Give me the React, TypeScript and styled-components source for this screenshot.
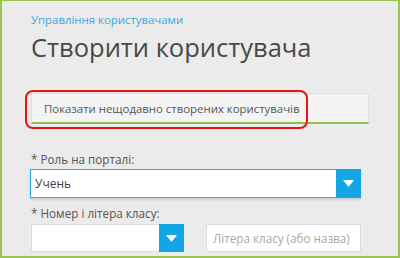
import React from 'react';
import styled, { createGlobalStyle } from 'styled-components';

const GlobalStyle = createGlobalStyle`
  html, body {
    margin: 0;
    padding: 0;
    background: #ebebeb;
  }
  body {
    font-family: "Open Sans", "Noto Sans", "DejaVu Sans", sans-serif;
  }
  * {
    box-sizing: border-box;
  }
`;

const Frame = styled.div`
  width: 400px;
  height: 258px;
  overflow: hidden;
  background: #ebebeb;
  border-style: solid;
  border-color: #9dc34f;
  border-width: 1px 2px 2px 2px;
  padding: 11px 0 0 29px;
  display: flex;
  flex-direction: column;
`;

const Breadcrumb = styled.a`
  font-size: 11.4px;
  line-height: 16px;
  color: #3aa7df;
  text-decoration: none;
`;

const Title = styled.h1`
  margin: 0;
  font-size: 25.5px;
  line-height: 38px;
  font-weight: 400;
  color: #4a4845;
`;

const Annotated = styled.div`
  position: relative;
  margin-top: 27px;
  width: 338px;
`;

const RecentToggle = styled.div`
  height: 31px;
  display: flex;
  align-items: center;
  padding-left: 12px;
  background: #f4f4f4;
  border: 1px solid #dedede;
  border-bottom: 2px solid #8cbf4c;
  font-size: 11.4px;
  color: #555;
`;

const Highlight = styled.div`
  position: absolute;
  left: -6px;
  top: -3px;
  width: 283px;
  height: 39px;
  border: 2px solid #e8141b;
  border-radius: 8px;
  pointer-events: none;
`;

const Label = styled.div<{ $gap: number }>`
  margin-top: ${(p) => p.$gap}px;
  font-size: 11.7px;
  line-height: 16px;
  color: #555;
`;

const Select = styled.div<{ $active?: boolean; $width: number }>`
  display: flex;
  width: ${(p) => p.$width}px;
  height: ${(p) => (p.$active ? 29 : 28)}px;
  background: #fff;
  border: 1px solid ${(p) => (p.$active ? '#2aa8e1' : '#dcdcdc')};
  box-shadow: ${(p) => (p.$active ? '0 2px 2px rgba(0,0,0,0.12)' : 'none')};
`;

const SelectValue = styled.div`
  flex: 1;
  display: flex;
  align-items: center;
  padding-left: 4px;
  font-size: 12px;
  color: #444;
`;

const Caret = styled.div`
  width: 25px;
  margin: -1px -1px -1px 0;
  background: #12a6e4;
  display: flex;
  align-items: center;
  justify-content: center;
`;

const Row = styled.div`
  margin-top: 3px;
  display: flex;
  gap: 22px;
`;

const TextInput = styled.input`
  width: 155px;
  height: 28px;
  border: 1px solid #dcdcdc;
  background: #fff;
  padding: 0 0 0 6px;
  font-family: inherit;
  font-size: 11.7px;
  color: #444;
  outline: none;
  &::placeholder {
    color: #a9a9a9;
  }
`;

const Triangle = () => (
  <svg width="11" height="7" viewBox="0 0 11 7">
    <polygon points="0,0 11,0 5.5,7" fill="#fff" />
  </svg>
);

export default function App() {
  return (
    <>
      <GlobalStyle />
      <Frame>
        <Breadcrumb>Управління користувачами</Breadcrumb>
        <Title>Створити користувача</Title>
        <Annotated>
          <RecentToggle>Показати нещодавно створених користувачів</RecentToggle>
          <Highlight />
        </Annotated>
        <Label $gap={27}>* Роль на порталі:</Label>
        <Select $active $width={331} style={{ marginTop: 2, marginLeft: -1 }}>
          <SelectValue>Учень</SelectValue>
          <Caret>
            <Triangle />
          </Caret>
        </Select>
        <Label $gap={7}>* Номер і літера класу:</Label>
        <Row>
          <Select $width={153}>
            <SelectValue />
            <Caret>
              <Triangle />
            </Caret>
          </Select>
          <TextInput placeholder="Літера класу (або назва)" readOnly />
        </Row>
      </Frame>
    </>
  );
}
